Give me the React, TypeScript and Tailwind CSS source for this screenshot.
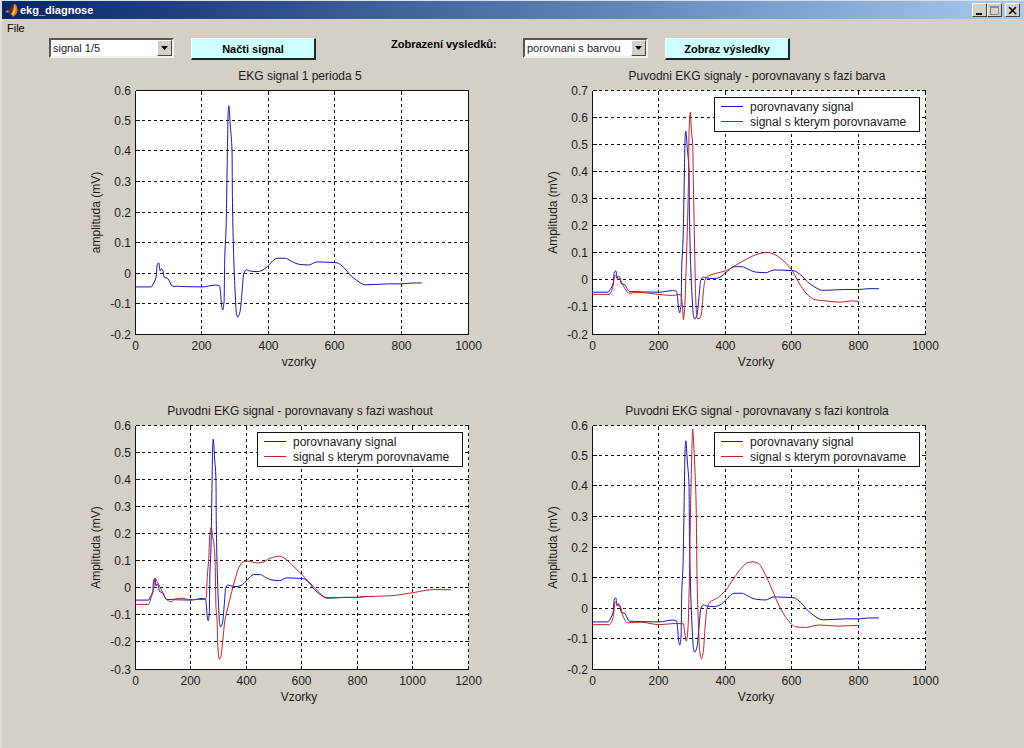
import { useState } from 'react'

type Point = [number, number]

type Series = {
  label: string
  color: string
  points: Point[]
}

type ChartProps = {
  title: string
  xLabel: string
  yLabel: string
  xTicks: number[]
  yTicks: number[]
  series: Series[]
  legend?: boolean
  boxed?: boolean
}

const BLUE = '#1414b4'
const RED = '#c41e28'

// plot area inside one chart, in viewBox units
const LEFT = 80.5
const TOP = 22.5
const WIDTH = 333
const HEIGHT = 244

const baseSignal: Point[] = [
  [0, -0.044], [48, -0.044], [50, -0.04], [62, -0.012], [65, 0.028], [70, 0.035],
  [74, 0.008], [78, 0.016], [82, 0.01], [86, -0.012], [96, -0.016], [112, -0.042],
  [130, -0.042], [150, -0.043], [200, -0.044], [240, -0.038], [252, -0.04],
  [256, -0.07], [258, -0.1], [262, -0.12], [266, -0.09], [268, 0.05], [272, 0.15],
  [276, 0.4], [278, 0.52], [280, 0.55], [285, 0.48], [290, 0.4], [291, 0.25],
  [295, 0.05], [300, -0.08], [303, -0.13], [307, -0.143], [314, -0.125],
  [320, -0.06], [325, 0], [334, 0.012], [340, 0.009], [365, 0.006], [380, 0.01],
  [393, 0.02], [405, 0.033], [425, 0.05], [450, 0.05], [465, 0.042], [492, 0.03],
  [520, 0.028], [545, 0.038], [575, 0.037], [605, 0.035], [625, 0.02],
  [645, -0.005], [665, -0.023], [690, -0.037], [720, -0.036], [760, -0.034],
  [800, -0.034], [830, -0.031], [860, -0.031],
]

const barvaSignal: Point[] = [
  [0, -0.052], [50, -0.052], [60, -0.03], [68, 0.02], [75, 0.005], [82, 0.005],
  [90, -0.015], [110, -0.047], [140, -0.045], [200, -0.052], [240, -0.056],
  [264, -0.052], [270, -0.09], [273, -0.145], [277, -0.1], [280, 0], [285, 0.2],
  [288, 0.35], [290, 0.55], [294, 0.62], [297, 0.55], [301, 0.5], [303, 0.35],
  [307, 0.1], [310, -0.07], [314, -0.14], [320, -0.142], [326, -0.13],
  [330, -0.09], [333, -0.04], [338, 0], [350, 0.017], [375, 0.027], [400, 0.035],
  [430, 0.055], [465, 0.08], [500, 0.098], [525, 0.103], [550, 0.093],
  [575, 0.07], [600, 0.035], [625, -0.02], [650, -0.058], [668, -0.072],
  [700, -0.076], [745, -0.081], [775, -0.076], [800, -0.078],
]

const washoutSignal: Point[] = [
  [0, -0.06], [46, -0.06], [58, -0.03], [66, 0], [70, 0.037], [80, 0.02],
  [98, -0.015], [115, -0.045], [130, -0.05], [142, -0.04], [168, -0.037],
  [190, -0.042], [250, -0.042], [256, -0.03], [258, 0.03], [264, 0.11],
  [268, 0.2], [273, 0.225], [278, 0.19], [284, 0.15], [287, 0.09], [290, -0.07],
  [294, -0.12], [297, -0.22], [302, -0.262], [308, -0.25], [314, -0.2],
  [322, -0.12], [333, -0.07], [345, -0.02], [358, 0.03], [372, 0.075],
  [388, 0.097], [405, 0.1], [440, 0.093], [460, 0.096], [485, 0.11],
  [520, 0.118], [540, 0.108], [570, 0.08], [600, 0.05], [640, 0.007],
  [690, -0.035], [750, -0.034], [800, -0.034], [830, -0.031], [920, -0.028],
  [960, -0.023], [1010, -0.015], [1040, -0.009], [1080, -0.005], [1137, -0.006],
]

const kontrolaSignal: Point[] = [
  [0, -0.053], [50, -0.053], [62, -0.03], [68, 0.022], [76, 0.01], [84, 0.005],
  [90, -0.02], [105, -0.047], [145, -0.045], [200, -0.053], [250, -0.049],
  [273, -0.05], [277, -0.08], [282, -0.107], [287, -0.06], [290, 0.05],
  [294, 0.3], [298, 0.5], [301, 0.588], [304, 0.54], [307, 0.47], [311, 0.35],
  [314, 0.1], [318, -0.05], [322, -0.14], [327, -0.165], [333, -0.14],
  [338, -0.06], [344, 0], [352, 0.02], [375, 0.035], [400, 0.06], [425, 0.1],
  [445, 0.13], [465, 0.15], [482, 0.153], [498, 0.148], [515, 0.12],
  [540, 0.06], [560, 0.01], [585, -0.035], [610, -0.06], [640, -0.062],
  [680, -0.054], [740, -0.058], [800, -0.055],
]

const compare = (points: Point[]): Series[] => [
  { label: 'porovnavany signal', color: BLUE, points: baseSignal },
  { label: 'signal s kterym porovnavame', color: RED, points },
]

const charts: ChartProps[] = [
  {
    title: 'EKG signal 1 perioda 5',
    xLabel: 'vzorky',
    yLabel: 'amplituda (mV)',
    xTicks: [0, 200, 400, 600, 800, 1000],
    yTicks: [-0.2, -0.1, 0, 0.1, 0.2, 0.3, 0.4, 0.5, 0.6],
    series: [{ label: 'signal', color: BLUE, points: baseSignal }],
    boxed: true,
  },
  {
    title: 'Puvodni EKG signaly - porovnavany s fazi barva',
    xLabel: 'Vzorky',
    yLabel: 'Amplituda (mV)',
    xTicks: [0, 200, 400, 600, 800, 1000],
    yTicks: [-0.2, -0.1, 0, 0.1, 0.2, 0.3, 0.4, 0.5, 0.6, 0.7],
    series: compare(barvaSignal),
    legend: true,
  },
  {
    title: 'Puvodni EKG signal - porovnavany s fazi washout',
    xLabel: 'Vzorky',
    yLabel: 'Amplituda (mV)',
    xTicks: [0, 200, 400, 600, 800, 1000, 1200],
    yTicks: [-0.3, -0.2, -0.1, 0, 0.1, 0.2, 0.3, 0.4, 0.5, 0.6],
    series: compare(washoutSignal),
    legend: true,
  },
  {
    title: 'Puvodni EKG signal - porovnavany s fazi kontrola',
    xLabel: 'Vzorky',
    yLabel: 'Amplituda (mV)',
    xTicks: [0, 200, 400, 600, 800, 1000],
    yTicks: [-0.2, -0.1, 0, 0.1, 0.2, 0.3, 0.4, 0.5, 0.6],
    series: compare(kontrolaSignal),
    legend: true,
  },
]

// monotone cubic through the points, so the spikes don't overshoot
function smoothPath(points: Point[]) {
  const slope = (a: Point, b: Point) => (b[1] - a[1]) / (b[0] - a[0])
  const tangents = points.map((p, i) => {
    if (i === 0 || i === points.length - 1) return 0
    const before = slope(points[i - 1], p)
    const after = slope(p, points[i + 1])
    return before * after <= 0 ? 0 : (2 * before * after) / (before + after)
  })
  let d = `M${points[0][0]} ${points[0][1]}`
  for (let i = 1; i < points.length; i++) {
    const [x0, y0] = points[i - 1]
    const [x1, y1] = points[i]
    const dx = (x1 - x0) / 3
    d += `C${x0 + dx} ${y0 + tangents[i - 1] * dx} ${x1 - dx} ${y1 - tangents[i] * dx} ${x1} ${y1}`
  }
  return d
}

function Chart({ title, xLabel, yLabel, xTicks, yTicks, series, legend, boxed }: ChartProps) {
  const xMax = xTicks[xTicks.length - 1]
  const yMin = yTicks[0]
  const yMax = yTicks[yTicks.length - 1]
  const right = LEFT + WIDTH
  const bottom = TOP + HEIGHT
  const sx = (x: number) => LEFT + (x / xMax) * WIDTH
  const sy = (y: number) => bottom - ((y - yMin) / (yMax - yMin)) * HEIGHT
  const gridX = (x: number) => Math.round(sx(x)) - 0.5
  const gridY = (y: number) => Math.round(sy(y)) - 0.5

  return (
    <svg
      viewBox="0 0 457 335"
      className="block w-full fill-[#1a1a1a] text-[12px]"
      role="img"
      aria-label={title}
    >
      <rect x={LEFT} y={TOP} width={WIDTH} height={HEIGHT} fill="#fff" />
      <g stroke="#111" shapeRendering="crispEdges" fill="none">
        <g strokeDasharray="3 3">
          {xTicks.slice(1).map((x) => (
            <line key={x} x1={gridX(x)} x2={gridX(x)} y1={bottom} y2={TOP} />
          ))}
          {yTicks.slice(1).map((y) => (
            <line key={y} x1={LEFT} x2={right} y1={gridY(y)} y2={gridY(y)} />
          ))}
        </g>
        {xTicks.map((x) => (
          <path key={x} d={`M${gridX(x)} ${bottom}v-4M${gridX(x)} ${TOP}v4`} />
        ))}
        {yTicks.map((y) => (
          <path key={y} d={`M${LEFT} ${gridY(y)}h4M${right} ${gridY(y)}h-4`} />
        ))}
        <path d={`M${LEFT} ${TOP}V${bottom}H${right}`} />
        {boxed && <path d={`M${LEFT} ${TOP}H${right}V${bottom}`} />}
      </g>

      {series.map((s) => (
        <path
          key={s.label}
          d={smoothPath(s.points.map(([x, y]): Point => [sx(x), sy(y)]))}
          fill="none"
          stroke={s.color}
          strokeLinejoin="round"
        />
      ))}

      <text x={LEFT + WIDTH / 2 - 2} y={12} textAnchor="middle">
        {title}
      </text>
      {yTicks.map((y) => (
        <text key={y} x={76} y={gridY(y) + 4} textAnchor="end">
          {y}
        </text>
      ))}
      {xTicks.map((x) => (
        <text key={x} x={gridX(x)} y={282} textAnchor="middle">
          {x}
        </text>
      ))}
      <text x={LEFT + WIDTH / 2 - 3} y={298} textAnchor="middle">
        {xLabel}
      </text>
      <text transform={`translate(45 ${TOP + HEIGHT / 2}) rotate(-90)`} textAnchor="middle">
        {yLabel}
      </text>

      {legend && (
        <g>
          <rect
            x={202.5}
            y={29.5}
            width={205}
            height={34}
            fill="#fff"
            stroke="#111"
            shapeRendering="crispEdges"
          />
          {series.map((s, i) => (
            <g key={s.label}>
              <line x1={209} x2={231} y1={38.5 + i * 15} y2={38.5 + i * 15} stroke={s.color} />
              <text x={238} y={43 + i * 15}>
                {s.label}
              </text>
            </g>
          ))}
        </g>
      )}
    </svg>
  )
}

function MatlabIcon() {
  return (
    <svg viewBox="0 0 16 16" className="size-4" aria-hidden="true">
      <path d="M1 9.5 4.4 7.8 6.2 9.3 4.4 11z" fill="#5f9fc4" />
      <path d="M4.4 7.8C7 7.2 8 3.6 10 2L9.4 8 6.4 12.6 4.4 11z" fill="#7a2418" />
      <path d="M10 2C12.4 1.6 13.6 5 13.6 8.4 13.4 11.6 11.4 13.4 8.6 15 8.4 13.4 7.6 12.6 6.4 12.6 8.8 10.4 9.6 6 10 2z" fill="#e8701c" />
      <path d="M10.8 2.8C12 5.4 11.8 9.6 9.2 13.6 8.8 12.4 8.4 12.2 7.8 12 9.8 9.4 10.6 6.4 10.8 2.8z" fill="#ffd84a" />
    </svg>
  )
}

type SelectProps = {
  id: string
  label: string
  options: string[]
  value: string
  onChange: (value: string) => void
}

function Select({ id, label, options, value, onChange }: SelectProps) {
  return (
    <div className="relative h-5 w-[125px]">
      <select
        id={id}
        aria-label={label}
        value={value}
        onChange={(e) => onChange(e.target.value)}
        className="block size-full appearance-none border-2 border-t-[#555] border-l-[#555] border-r-[#f4f2ee] border-b-[#f4f2ee] bg-white pr-4 pl-0.5 text-[11px] leading-4 text-[#222]"
      >
        {options.map((option) => (
          <option key={option}>{option}</option>
        ))}
      </select>
      <span className="pointer-events-none absolute inset-y-0.5 right-0.5 flex w-[15px] items-center justify-center border border-t-white border-l-white border-r-[#444] border-b-[#444] bg-[#d4d0c8]">
        <svg viewBox="0 0 7 4" className="h-1 w-[7px]" aria-hidden="true">
          <path d="M0 0h7L3.5 4z" fill="#000" />
        </svg>
      </span>
    </div>
  )
}

const actionButton =
  'h-[22px] w-[125px] border border-t-[#effcfc] border-l-[#effcfc] border-r-2 border-b-2 border-r-[#1c2828] border-b-[#1c2828] bg-[#ccffff] text-[11px] leading-4 font-bold'

const windowButton =
  'flex h-[14px] w-[15px] items-center justify-center border border-t-white border-l-white border-r-[#404040] border-b-[#404040] bg-[#d4d0c8]'

export default function App() {
  const [signal, setSignal] = useState('signal 1/5')
  const [comparison, setComparison] = useState('porovnani s barvou')

  return (
    <div className="min-h-screen border-l-2 border-[#dfdfda] bg-[#d4d0c8] font-['Liberation_Sans',Arial,sans-serif] text-black">
      <header className="flex h-[19px] items-center border-t border-[#d4e4e8] bg-linear-to-r from-[#0a246a] to-[#a6caf0] pr-1 pl-0.5">
        <MatlabIcon />
        <h1 className="flex-1 text-[11px] leading-4 font-bold text-white">ekg_diagnose</h1>
        <button className={windowButton} aria-label="Minimize">
          <svg viewBox="0 0 9 9" className="size-[9px]">
            <path d="M1 7h6v2H1z" />
          </svg>
        </button>
        <button className={windowButton} aria-label="Maximize">
          <svg viewBox="0 0 9 9" className="size-[9px]" shapeRendering="crispEdges">
            <path d="M.5 1h8v7.5h-8zM0 .5h9" fill="none" stroke="#8a8a86" />
          </svg>
        </button>
        <button className={`${windowButton} ml-[3px]`} aria-label="Close">
          <svg viewBox="0 0 9 9" className="size-[9px]">
            <path d="M1 1l7 7M8 1L1 8" stroke="#000" strokeWidth="1.6" />
          </svg>
        </button>
      </header>

      <nav className="flex h-[18px] items-center pl-[5px]">
        <button className="text-[11px] leading-4">File</button>
      </nav>

      <main>
        <div className="flex flex-wrap gap-x-[75px] gap-y-2 pt-px pl-[47px]">
          <div className="flex gap-[17px]">
            <Select
              id="signal"
              label="Signal"
              options={['signal 1/5', 'signal 2/5', 'signal 3/5', 'signal 4/5', 'signal 5/5']}
              value={signal}
              onChange={setSignal}
            />
            <button className={actionButton}>Načti signal</button>
          </div>
          <div className="flex">
            <label htmlFor="comparison" className="w-[132px] text-[11px] leading-3 font-bold">
              Zobrazení vysledků:
            </label>
            <Select
              id="comparison"
              label="Zobrazení vysledků"
              options={['porovnani s barvou', 'porovnani s washout', 'porovnani s kontrolou']}
              value={comparison}
              onChange={setComparison}
            />
            <button className={`${actionButton} ml-[17px]`}>Zobraz výsledky</button>
          </div>
        </div>

        <div className="grid grid-cols-2 pt-2 pr-[55px] pl-[53px]">
          {charts.map((chart) => (
            <Chart key={chart.title} {...chart} />
          ))}
        </div>
      </main>
    </div>
  )
}
